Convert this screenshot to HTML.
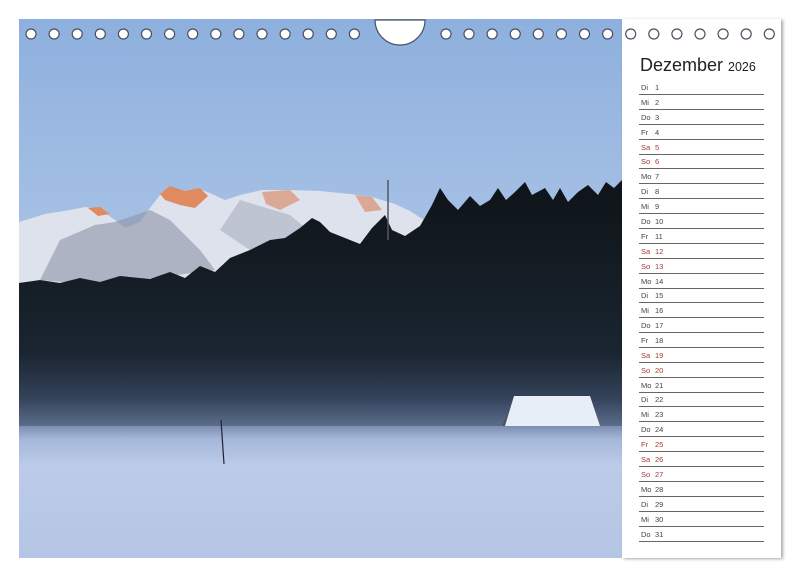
<!DOCTYPE html>
<html><head><meta charset="utf-8"><style>
body{margin:0;width:800px;height:577px;background:#fff;position:relative;overflow:hidden;font-family:"Liberation Sans",sans-serif}
.panel{position:absolute;left:622px;top:19px;width:159px;height:539px;background:#fff;box-shadow:2px 1px 3px rgba(0,0,0,.35)}
.title{position:absolute;left:640px;top:55px;font-size:18px;color:#222}
.title small{font-size:12.5px}
.row{position:absolute;left:639px;width:125px;height:14px;border-bottom:1.5px solid #666;font-size:7.5px;color:#444}
.row span{position:absolute;top:3px}
.row .d{left:2px}.row .n{left:16px}
.red{color:#a03a3a}
</style></head><body>
<svg style="position:absolute;left:0;top:0" width="800" height="577" viewBox="0 0 800 577">
<defs>
<linearGradient id="sky" x1="0" y1="0" x2="0" y2="1"><stop offset="0" stop-color="#8eb0de"/><stop offset="0.6" stop-color="#b3c9e8"/><stop offset="1" stop-color="#d0dcee"/></linearGradient>
<linearGradient id="snow" x1="0" y1="0" x2="0" y2="1"><stop offset="0" stop-color="#7d8fb0"/><stop offset="0.1" stop-color="#a5b7d9"/><stop offset="0.3" stop-color="#bccbe8"/><stop offset="1" stop-color="#b4c5e5"/></linearGradient>
<linearGradient id="for" x1="0" y1="0" x2="0" y2="1"><stop offset="0" stop-color="#0e1418"/><stop offset="0.7" stop-color="#1a2530"/><stop offset="0.88" stop-color="#34435a"/><stop offset="1" stop-color="#5e7090"/></linearGradient>
</defs>
<rect x="19" y="19" width="603" height="539" fill="url(#sky)"/>
<polygon fill="#dde2ec" points="19,222 45,214 70,210 85,207 100,209 115,220 125,228 140,222 150,208 160,195 170,187 185,191 200,189 212,194 225,200 240,195 262,190 290,190 320,191 350,194 372,197 395,204 410,211 424,220 424,270 19,285"/>
<polygon fill="#8d94a8" opacity=".6" points="115,222 150,210 170,220 200,250 215,270 100,285 40,280 60,240 95,225"/>
<polygon fill="#a0a6b8" opacity=".5" points="240,200 290,215 320,240 250,250 220,230"/>
<polygon fill="#e08a60" points="160,194 170,186 185,191 200,188 208,196 195,208 180,205 165,200"/>
<polygon fill="#e08a60" points="88,208 100,207 110,214 98,216"/>
<polygon fill="#d99a80" opacity=".8" points="262,192 290,190 300,200 280,210 266,204"/>
<polygon fill="#d99a80" opacity=".8" points="355,195 372,197 382,210 365,212"/>
<polygon fill="url(#for)" points="19,283 40,280 60,283 80,278 100,282 120,276 150,279 170,272 185,278 200,266 215,272 230,258 250,250 270,240 285,238 300,228 312,218 320,222 330,232 345,238 360,244 372,228 385,215 392,230 405,236 420,226 432,205 440,188 448,200 458,210 470,196 480,206 490,200 498,188 506,200 515,192 525,182 532,195 545,188 553,200 560,188 568,202 578,192 588,185 598,195 606,182 614,188 622,180 622,428 19,428"/>
<rect x="19" y="426" width="603" height="132" fill="url(#snow)"/>
<line x1="221" y1="420" x2="224" y2="464" stroke="#223" stroke-width="1.2"/>
<line x1="388" y1="180" x2="388" y2="240" stroke="#556" stroke-width="1.5"/>
<polygon fill="#4c5568" points="502,426 514,397 520,426"/>
<polygon fill="#e8eef8" points="505,426 514,396 590,396 600,426"/>
<g fill="#fff" stroke="#4a5060" stroke-width="1.2">
<circle cx="31" cy="34" r="5"/><circle cx="54.1" cy="34" r="5"/><circle cx="77.2" cy="34" r="5"/><circle cx="100.3" cy="34" r="5"/><circle cx="123.4" cy="34" r="5"/><circle cx="146.5" cy="34" r="5"/><circle cx="169.6" cy="34" r="5"/><circle cx="192.7" cy="34" r="5"/><circle cx="215.8" cy="34" r="5"/><circle cx="238.9" cy="34" r="5"/><circle cx="262" cy="34" r="5"/><circle cx="285.1" cy="34" r="5"/><circle cx="308.2" cy="34" r="5"/><circle cx="331.3" cy="34" r="5"/><circle cx="354.4" cy="34" r="5"/>
<path d="M375,20 A25,25 0 0 0 425,20 Z"/>
</g>
</svg>
<div class="panel"></div>
<svg style="position:absolute;left:0;top:0" width="800" height="577" viewBox="0 0 800 577">
<g fill="#fff" stroke="#4a5060" stroke-width="1.2">
<circle cx="446" cy="34" r="5"/><circle cx="469" cy="34" r="5"/><circle cx="492.1" cy="34" r="5"/><circle cx="515.2" cy="34" r="5"/><circle cx="538.3" cy="34" r="5"/><circle cx="561.4" cy="34" r="5"/><circle cx="584.5" cy="34" r="5"/><circle cx="607.6" cy="34" r="5"/><circle cx="630.7" cy="34" r="5"/><circle cx="653.8" cy="34" r="5"/><circle cx="676.9" cy="34" r="5"/><circle cx="700" cy="34" r="5"/><circle cx="723.1" cy="34" r="5"/><circle cx="746.2" cy="34" r="5"/><circle cx="769.3" cy="34" r="5"/>
</g></svg>
<div class="title">Dezember <small>2026</small></div>
<div class="row" style="top:80px"><span class="d">Di</span><span class="n">1</span></div>
<div class="row" style="top:95px"><span class="d">Mi</span><span class="n">2</span></div>
<div class="row" style="top:110px"><span class="d">Do</span><span class="n">3</span></div>
<div class="row" style="top:125px"><span class="d">Fr</span><span class="n">4</span></div>
<div class="row red" style="top:140px"><span class="d">Sa</span><span class="n">5</span></div>
<div class="row red" style="top:154px"><span class="d">So</span><span class="n">6</span></div>
<div class="row" style="top:169px"><span class="d">Mo</span><span class="n">7</span></div>
<div class="row" style="top:184px"><span class="d">Di</span><span class="n">8</span></div>
<div class="row" style="top:199px"><span class="d">Mi</span><span class="n">9</span></div>
<div class="row" style="top:214px"><span class="d">Do</span><span class="n">10</span></div>
<div class="row" style="top:229px"><span class="d">Fr</span><span class="n">11</span></div>
<div class="row red" style="top:244px"><span class="d">Sa</span><span class="n">12</span></div>
<div class="row red" style="top:259px"><span class="d">So</span><span class="n">13</span></div>
<div class="row" style="top:274px"><span class="d">Mo</span><span class="n">14</span></div>
<div class="row" style="top:288px"><span class="d">Di</span><span class="n">15</span></div>
<div class="row" style="top:303px"><span class="d">Mi</span><span class="n">16</span></div>
<div class="row" style="top:318px"><span class="d">Do</span><span class="n">17</span></div>
<div class="row" style="top:333px"><span class="d">Fr</span><span class="n">18</span></div>
<div class="row red" style="top:348px"><span class="d">Sa</span><span class="n">19</span></div>
<div class="row red" style="top:363px"><span class="d">So</span><span class="n">20</span></div>
<div class="row" style="top:378px"><span class="d">Mo</span><span class="n">21</span></div>
<div class="row" style="top:392px"><span class="d">Di</span><span class="n">22</span></div>
<div class="row" style="top:407px"><span class="d">Mi</span><span class="n">23</span></div>
<div class="row" style="top:422px"><span class="d">Do</span><span class="n">24</span></div>
<div class="row red" style="top:437px"><span class="d">Fr</span><span class="n">25</span></div>
<div class="row red" style="top:452px"><span class="d">Sa</span><span class="n">26</span></div>
<div class="row red" style="top:467px"><span class="d">So</span><span class="n">27</span></div>
<div class="row" style="top:482px"><span class="d">Mo</span><span class="n">28</span></div>
<div class="row" style="top:497px"><span class="d">Di</span><span class="n">29</span></div>
<div class="row" style="top:512px"><span class="d">Mi</span><span class="n">30</span></div>
<div class="row" style="top:527px"><span class="d">Do</span><span class="n">31</span></div>
</body></html>
